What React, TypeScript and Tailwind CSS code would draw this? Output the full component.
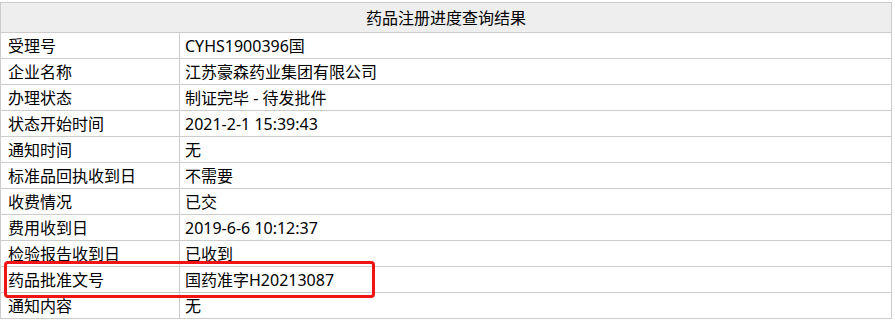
const rows: [string, string][] = [
  ["受理号", "CYHS1900396国"],
  ["企业名称", "江苏豪森药业集团有限公司"],
  ["办理状态", "制证完毕 - 待发批件"],
  ["状态开始时间", "2021-2-1 15:39:43"],
  ["通知时间", "无"],
  ["标准品回执收到日", "不需要"],
  ["收费情况", "已交"],
  ["费用收到日", "2019-6-6 10:12:37"],
  ["检验报告收到日", "已收到"],
  ["药品批准文号", "国药准字H20213087"],
  ["通知内容", "无"],
];

export default function App() {
  return (
    <div className="w-[895px] h-[321px] bg-white pt-[2px] font-['Noto_Sans','Noto_Sans_CJK_SC',sans-serif] text-[16px] text-black">
      <div className="relative w-[892px] border-l border-r border-[#cccccc]">
        {/* 标题 */}
        <div className="h-[31px] flex items-center justify-center bg-[#eeeeee] border-t border-b border-[#cccccc] leading-none">
          药品注册进度查询结果
        </div>

        {rows.map(([label, value]) => (
          <div key={label} className="flex h-[26px] border-b border-[#cccccc] leading-none">
            <div className="w-[179px] shrink-0 border-r border-[#cccccc] flex items-center pl-[7px]">
              {label}
            </div>
            <div className="flex-1 flex items-center pl-[5px]">{value}</div>
          </div>
        ))}

        {/* 红框标注 */}
        <div className="absolute left-[3px] top-[259px] w-[371px] h-[37px] border-[3px] border-[#f01414] rounded-[4px] pointer-events-none" />
      </div>
    </div>
  );
}
